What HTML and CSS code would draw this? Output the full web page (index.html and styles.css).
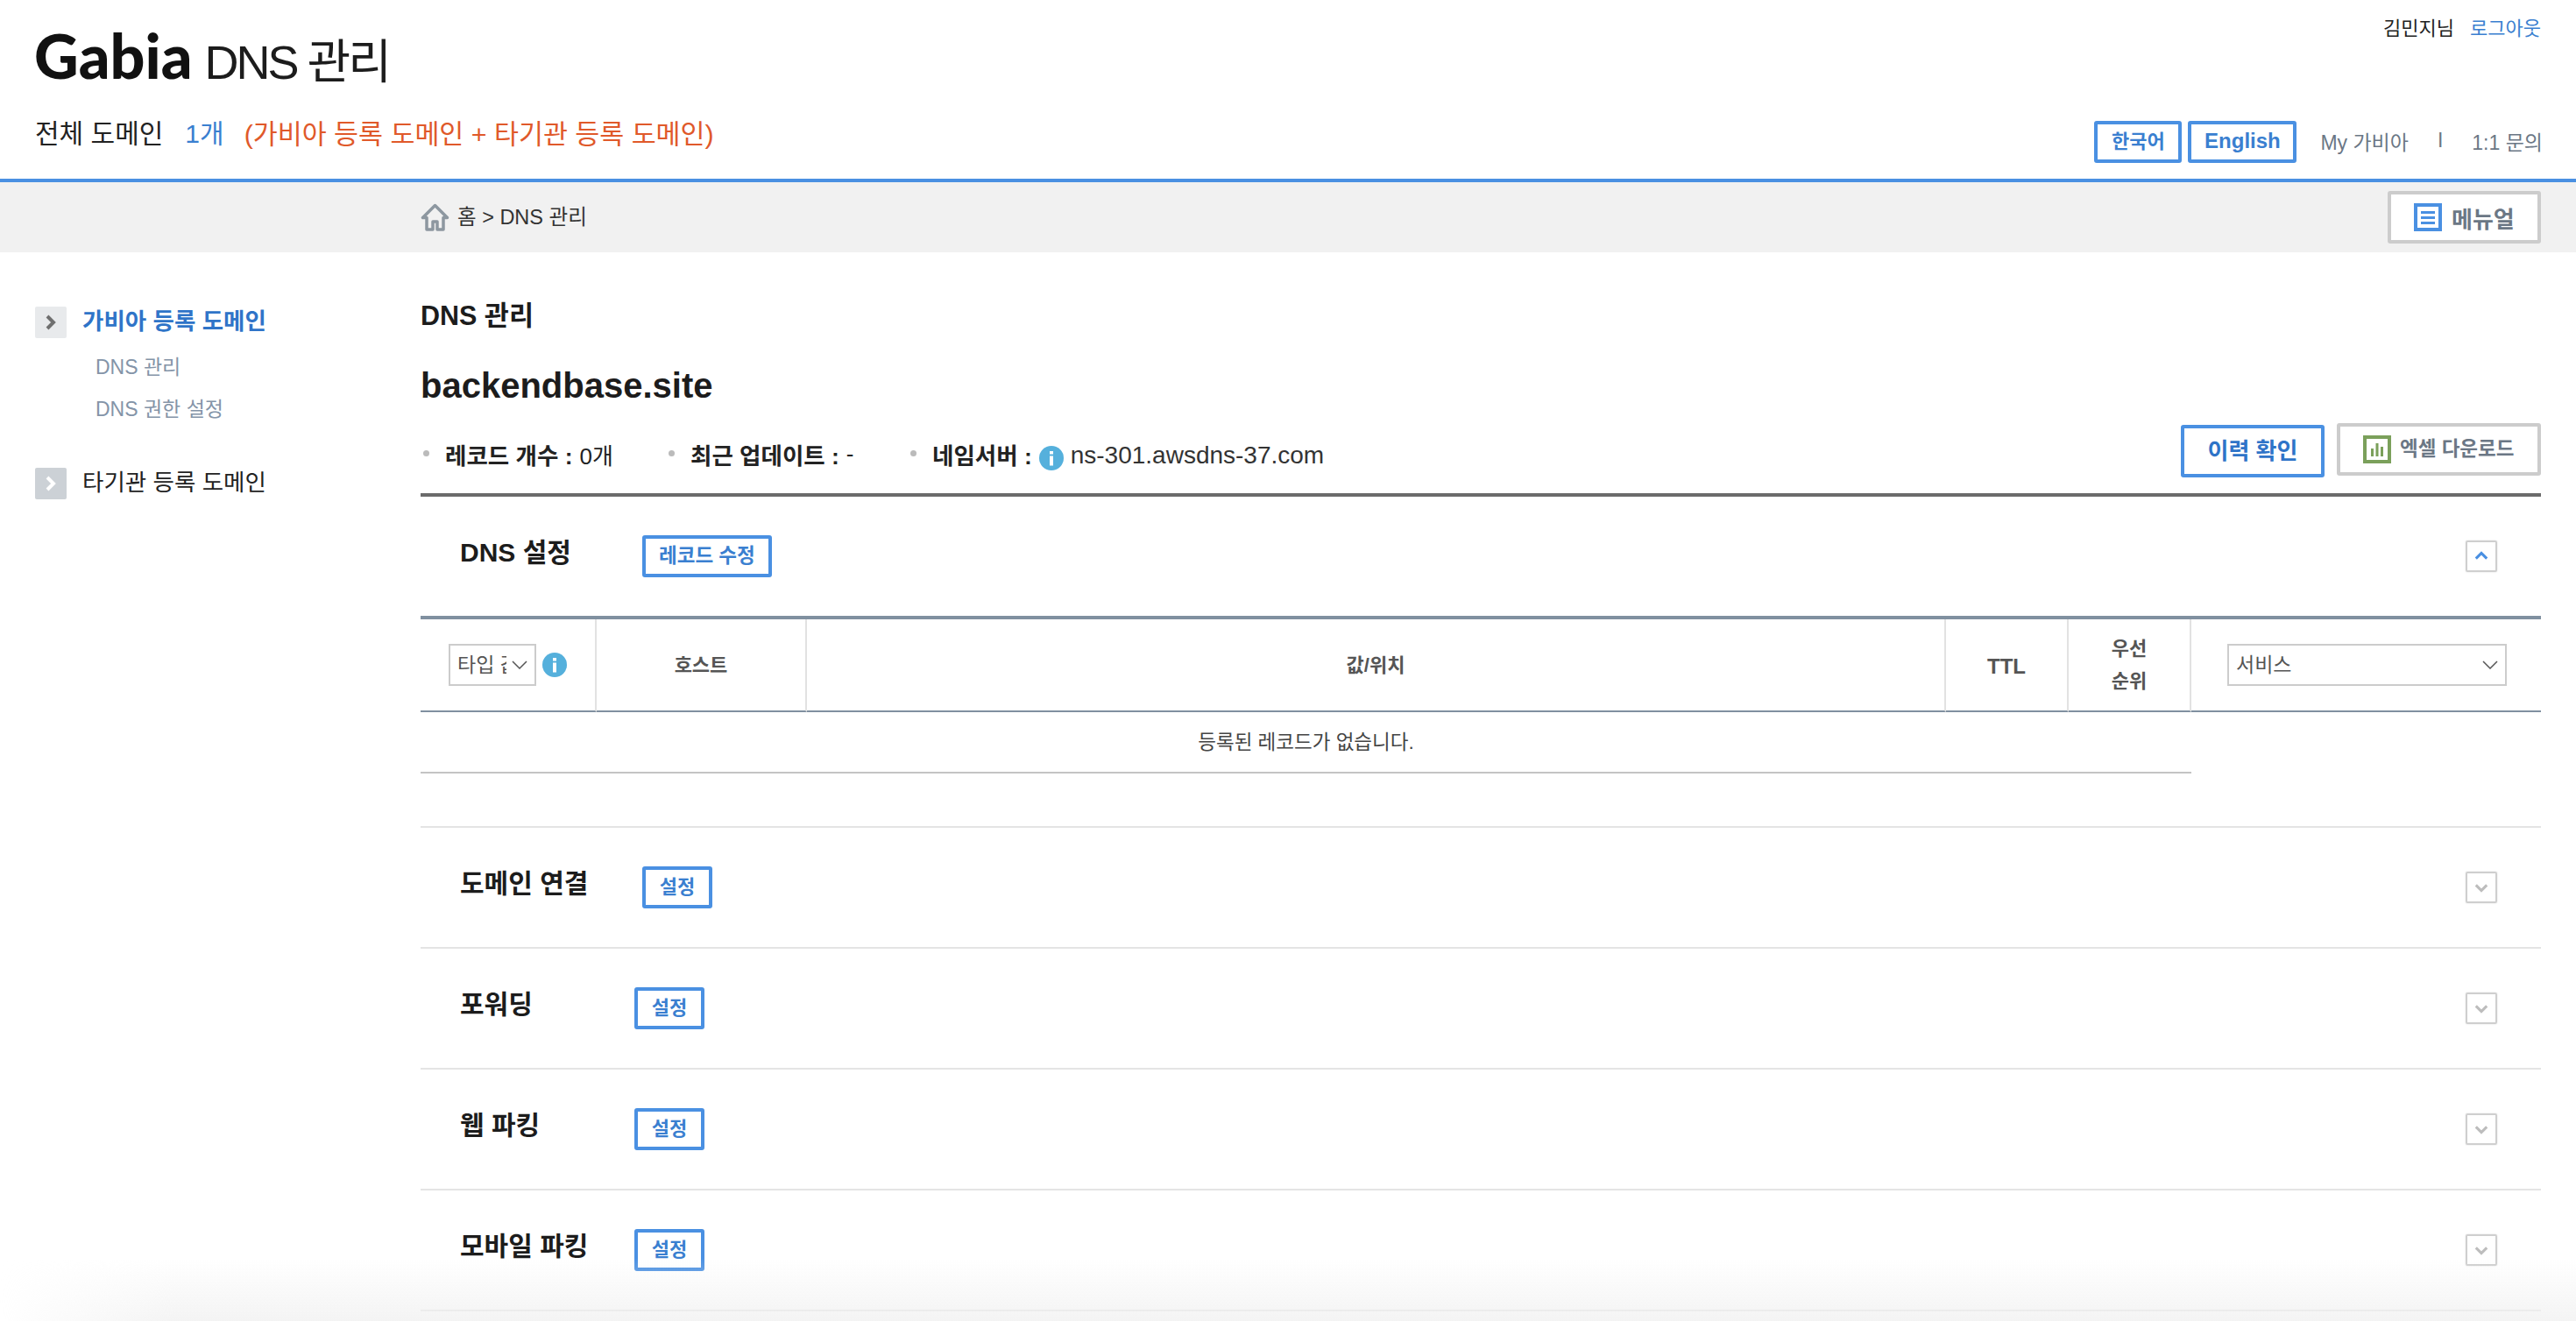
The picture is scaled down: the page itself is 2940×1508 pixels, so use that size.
FILE: index.html
```html
<!DOCTYPE html>
<html lang="ko">
<head>
<meta charset="utf-8">
<title>Gabia DNS 관리</title>
<link rel="stylesheet" href="styles.css">
</head>
<body>
<header class="site-header">
  <div class="brand-col">
    <h1 class="brand"><span class="brand-logo">Gabia</span><span class="brand-name">DNS 관리</span></h1>
    <p class="summary"><span>전체 도메인</span><span class="summary-count">1개</span><span class="summary-note">(가비아 등록 도메인 + 타기관 등록 도메인)</span></p>
  </div>
  <div class="util-col">
    <div class="user"><span>김민지님</span><a class="logout">로그아웃</a></div>
    <nav class="links">
      <a class="btn btn-lang-ko">한국어</a>
      <a class="btn btn-lang-en">English</a>
      <a class="link link-my">My 가비아</a>
      <span class="link link-sep">I</span>
      <a class="link link-ask">1:1 문의</a>
    </nav>
  </div>
</header>

<div class="crumbs">
  <div class="crumb-path">
    <svg class="home-icon" viewBox="0 0 33 32" aria-hidden="true"><path d="M16.5 2.500 L2.500 16.500 H7 V30 H14 V21 H19 V30 H26 V16.500 H30.500 Z" fill="none" stroke="#8d97a0" stroke-width="3.500" stroke-linejoin="round"/></svg>
    <span class="crumb-text">홈 &gt; DNS 관리</span>
  </div>
  <a class="btn-grey btn-manual">
    <svg class="sq-icon" viewBox="0 0 32 32" aria-hidden="true"><rect width="32" height="32" fill="#4a90e2"/><rect x="4" y="4" width="24" height="24" fill="#fff"/><path d="M8 9h16v3H8zM8 15h16v3H8zM8 21h16v3H8z" fill="#4a90e2"/></svg>
    <span>메뉴얼</span>
  </a>
</div>

<div class="layout">
  <aside class="sidebar">
    <div class="side-head side-head-active">
      <span class="side-arrow"><svg viewBox="0 0 36 36" aria-hidden="true"><path d="M14 11 L21 18 L14 25" fill="none" stroke="#6f6f6f" stroke-width="4"/></svg></span>
      <span class="side-label">가비아 등록 도메인</span>
    </div>
    <ul class="side-list">
      <li>DNS 관리</li>
      <li>DNS 권한 설정</li>
    </ul>
    <div class="side-head">
      <span class="side-arrow side-arrow-off"><svg viewBox="0 0 36 36" aria-hidden="true"><path d="M14 11 L21 18 L14 25" fill="none" stroke="#fff" stroke-width="4"/></svg></span>
      <span class="side-label">타기관 등록 도메인</span>
    </div>
  </aside>

  <main class="content">
    <h2 class="page-title">DNS 관리</h2>
    <h3 class="domain">backendbase.site</h3>
    <div class="info-row">
      <ul class="info-list">
        <li class="info-item info-records"><b>레코드 개수 :</b><span>0개</span></li>
        <li class="info-item info-updated"><b>최근 업데이트 :</b><span>-</span></li>
        <li class="info-item"><b>네임서버 :</b>
          <svg class="info-icon info-icon-ns" viewBox="0 0 28 28" aria-hidden="true"><circle cx="14" cy="14" r="14" fill="#55b0dc"/><rect x="12" y="6" width="4" height="3.500" fill="#fff"/><rect x="12" y="11.500" width="4" height="11" fill="#fff"/></svg>
          <span class="ns">ns-301.awsdns-37.com</span></li>
      </ul>
      <div class="info-actions">
        <a class="btn btn-history">이력 확인</a>
        <a class="btn-grey btn-excel">
          <svg class="sq-icon" viewBox="0 0 32 32" aria-hidden="true"><rect width="32" height="32" fill="#7ba05b"/><rect x="4" y="4" width="24" height="24" fill="#fff"/><path d="M9 15h3v9H9zM14.500 9h3v15h-3zM20 13h3v11h-3z" fill="#7ba05b"/></svg>
          <span>엑셀 다운로드</span>
        </a>
      </div>
    </div>

    <section class="panel panel-open">
      <div class="panel-head">
        <h4 class="panel-title">DNS 설정</h4>
        <a class="btn btn-small btn-record">레코드 수정</a>
        <span class="toggle"><svg viewBox="0 0 36 36" aria-hidden="true"><path d="M11 21 L18 14 L25 21" fill="none" stroke="#4a90e2" stroke-width="3.500"/></svg></span>
      </div>
      <table class="dns-table">
        <colgroup><col class="c-type"><col class="c-host"><col class="c-value"><col class="c-ttl"><col class="c-prio"><col class="c-svc"></colgroup>
        <thead>
          <tr>
            <th class="cell-type">
              <div class="type-wrap">
                <div class="select select-type"><span class="select-text">타입 값</span><svg class="select-chev" viewBox="0 0 18 10" aria-hidden="true"><path d="M1 1 L9 9 L17 1" fill="none" stroke="#555" stroke-width="1.500"/></svg></div>
                <svg class="info-icon" viewBox="0 0 28 28" aria-hidden="true"><circle cx="14" cy="14" r="14" fill="#55b0dc"/><rect x="12" y="6" width="4" height="3.500" fill="#fff"/><rect x="12" y="11.500" width="4" height="11" fill="#fff"/></svg>
              </div>
            </th>
            <th>호스트</th>
            <th>값/위치</th>
            <th class="cell-ttl">TTL</th>
            <th class="cell-prio">우선<br>순위</th>
            <th class="cell-svc">
              <div class="select select-svc"><span class="select-text">서비스</span><svg class="select-chev" viewBox="0 0 18 10" aria-hidden="true"><path d="M1 1 L9 9 L17 1" fill="none" stroke="#555" stroke-width="1.500"/></svg></div>
            </th>
          </tr>
        </thead>
        <tbody>
          <tr><td class="empty" colspan="5">등록된 레코드가 없습니다.</td><td class="empty-side"></td></tr>
        </tbody>
      </table>
    </section>

    <section class="panel">
      <div class="panel-head">
        <h4 class="panel-title">도메인 연결</h4>
        <a class="btn btn-small">설정</a>
        <span class="toggle toggle-closed"><svg viewBox="0 0 36 36" aria-hidden="true"><path d="M11 15 L18 22 L25 15" fill="none" stroke="#bdbdbd" stroke-width="3.500"/></svg></span>
      </div>
    </section>
    <section class="panel">
      <div class="panel-head">
        <h4 class="panel-title panel-title-short">포워딩</h4>
        <a class="btn btn-small">설정</a>
        <span class="toggle toggle-closed"><svg viewBox="0 0 36 36" aria-hidden="true"><path d="M11 15 L18 22 L25 15" fill="none" stroke="#bdbdbd" stroke-width="3.500"/></svg></span>
      </div>
    </section>
    <section class="panel">
      <div class="panel-head">
        <h4 class="panel-title panel-title-short">웹 파킹</h4>
        <a class="btn btn-small">설정</a>
        <span class="toggle toggle-closed"><svg viewBox="0 0 36 36" aria-hidden="true"><path d="M11 15 L18 22 L25 15" fill="none" stroke="#bdbdbd" stroke-width="3.500"/></svg></span>
      </div>
    </section>
    <section class="panel">
      <div class="panel-head">
        <h4 class="panel-title panel-title-short">모바일 파킹</h4>
        <a class="btn btn-small">설정</a>
        <span class="toggle toggle-closed"><svg viewBox="0 0 36 36" aria-hidden="true"><path d="M11 15 L18 22 L25 15" fill="none" stroke="#bdbdbd" stroke-width="3.500"/></svg></span>
      </div>
    </section>
  </main>
</div>
<div class="page-fade"></div>
</body>
</html>
```

FILE: styles.css
```css
* { box-sizing: border-box; }
html, body { margin: 0; padding: 0; background: #fff; }
html { height: 100%; overflow: hidden; }
body {
  font-family: "Liberation Sans", "Noto Sans CJK KR", sans-serif;
  color: #222;
  font-size: 22px;
}
h1, h2, h3, h4, p, ul { margin: 0; padding: 0; }
ul { list-style: none; }

/* Header */
.site-header {
  height: 208px;
  border-bottom: 4px solid #4a90e2;
  padding: 0 38px 0 40px;
  display: flex;
  justify-content: space-between;
}
.brand { display: flex; align-items: baseline; padding-top: 30px; font-weight: 400; line-height: 66px; color: #1c1c1c; }
.brand-logo { font-family: Lato, sans-serif; font-weight: 900; font-size: 70px; color: #111; margin-left: -1px; }
.brand-name { font-size: 54px; letter-spacing: -3px; margin-left: 14px; }
.summary { display: flex; margin-top: 29px; font-size: 30px; line-height: 40px; }
.summary-count { color: #3a7fd0; margin-left: 25px; }
.summary-note { color: #e0592a; margin-left: 23px; font-size: 30.400px; }

.util-col { display: flex; flex-direction: column; align-items: flex-end; }
.user { display: flex; gap: 18px; padding-top: 18px; padding-right: 2px; line-height: 30px; }
.logout { color: #3a7fd0; }
.links { display: flex; align-items: center; margin-top: 90px; height: 48px; }

.btn {
  display: flex;
  align-items: center;
  justify-content: center;
  border: 4px solid #4a90e2;
  border-radius: 3px;
  color: #3a7fd0;
  font-weight: 700;
  background: #fff;
}
.btn-lang-ko { width: 100px; height: 48px; padding-bottom: 6px; }
.btn-lang-en { width: 124px; height: 48px; margin-left: 7px; font-size: 24px; padding-bottom: 2px; }
.link { color: #6b7785; font-size: 23px; padding-bottom: 3px; }
.link-my { margin-left: 27px; }
.link-sep { margin-left: 33px; }
.link-ask { margin-left: 33px; }

/* Breadcrumb bar */
.crumbs {
  height: 80px;
  background: #f1f1f1;
  padding: 0 40px 0 480px;
  display: flex;
  align-items: center;
  justify-content: space-between;
}
.crumb-path { display: flex; align-items: center; gap: 9px; font-size: 23.500px; color: #333; }
.crumb-text { padding-bottom: 5px; }
.home-icon { width: 33px; height: 32px; }
.btn-grey {
  display: flex;
  align-items: center;
  background: #fff;
  border: 4px solid #ccc;
  border-radius: 3px;
  color: #6b7785;
  font-weight: 700;
}
.btn-manual { width: 175px; height: 60px; padding-left: 26px; gap: 11px; font-size: 26px; }
.sq-icon { width: 32px; height: 32px; flex: none; }

/* Main layout */
.layout { display: flex; }
.sidebar { width: 480px; flex: none; padding: 62px 0 0 40px; }
.side-head { display: flex; align-items: center; gap: 18px; font-size: 26.500px; height: 36px; }
.side-label { padding-bottom: 7px; }
.side-head-active { color: #2f74c8; font-weight: 700; }
.side-arrow { width: 36px; height: 36px; background: #e8eaec; border-radius: 2px; display: block; }
.side-arrow svg { display: block; width: 36px; height: 36px; }
.side-arrow-off { background: #ccd1d6; }
.side-list { padding: 18px 0 0 69px; height: 148px; color: #8494a8; font-size: 23px; }
.side-list li { line-height: 30px; margin-bottom: 18px; }

.content { width: 2420px; flex: none; }
.page-title { font-size: 30.500px; line-height: 40px; margin-top: 52px; color: #1c1c1c; }
.domain { font-size: 40px; line-height: 50px; margin-top: 35px; color: #1c1c1c; }
.info-row { display: flex; justify-content: space-between; margin-top: 18px; height: 84px; border-bottom: 4px solid #6b6b6b; align-items: flex-start; }
.info-list { display: flex; padding-top: 13px; font-size: 26px; }
.info-item { display: flex; align-items: center; height: 44px; gap: 8px; position: relative; padding-left: 28px; white-space: nowrap; }
.info-item::before { content: ""; position: absolute; left: 3px; top: 18px; width: 7px; height: 7px; border-radius: 50%; background: #bbb; }
.info-item b { color: #222; font-size: 26.500px; }
.info-records { width: 280px; }
.info-updated { width: 276px; }
.info-icon { width: 28px; height: 28px; flex: none; }
.info-icon-ns { margin-top: 10px; }
.ns { font-size: 28px; color: #333; padding-top: 4px; }
.info-actions { display: flex; gap: 14px; align-items: flex-start; }
.btn-history { width: 164px; height: 60px; font-size: 26px; margin-top: 2px; color: #2f74c8; padding-bottom: 6px; }
.btn-excel { width: 233px; height: 60px; padding-left: 26px; gap: 10px; font-size: 22.500px; }
.btn-excel span { padding-bottom: 6px; }

/* Panels */
.panel { border-bottom: 2px solid #e4e4e4; }
.panel-head { height: 136px; display: flex; align-items: center; padding: 0 50px 0 45px; }
.panel-title { width: 208px; font-size: 30px; line-height: 40px; padding-bottom: 8px; color: #1c1c1c; }
.panel-title-short { width: 199px; }
.btn-small { font-size: 22px; height: 48px; padding: 0 14px 6px; min-width: 80px; }
.btn-record { font-size: 22.500px; padding: 0 15px 6px; }
.toggle { margin-left: auto; width: 36px; height: 36px; border: 2px solid #cfcfcf; border-radius: 2px; box-shadow: 0 0 2px #ddd; }
.toggle svg { display: block; width: 32px; height: 32px; }
.panel-open { padding-bottom: 60px; }

/* Table */
.dns-table {
  width: 2420px;
  table-layout: fixed;
  border-collapse: separate;
  border-spacing: 0;
  border-top: 4px solid #8090a0;
}
.c-type { width: 201px; }
.c-host { width: 240px; }
.c-value { width: 1300px; }
.c-ttl { width: 140px; }
.c-prio { width: 140px; }
.c-svc { width: 399px; }
.dns-table th {
  height: 106px;
  border-bottom: 2px solid #8090a0;
  border-right: 2px solid #e2e2e2;
  font-size: 22px;
  font-weight: 700;
  color: #555;
  padding: 0;
  line-height: 37px;
}
.dns-table th.cell-svc { border-right: 0; padding-left: 41px; }
.dns-table th.cell-type { padding-left: 32px; }
.dns-table th.cell-ttl { font-size: 24px; padding-top: 2px; }
.type-wrap { display: flex; align-items: center; gap: 7px; }
.select {
  display: flex;
  align-items: center;
  justify-content: space-between;
  height: 48px;
  border: 2px solid #ccc;
  background: #fff;
  font-weight: 400;
  font-size: 23px;
  color: #555;
  padding: 0 8px;
}
.select-type { width: 100px; }
.select-type .select-text { width: 56px; overflow: hidden; white-space: nowrap; text-align: left; }
.select-svc { width: 319px; }
.select-chev { width: 18px; height: 10px; flex: none; }
.empty { height: 70px; border-bottom: 2px solid #c4c4c4; text-align: center; font-size: 22.500px; color: #444; padding: 0 0 4px; }
.empty-side { padding: 0; }

.page-fade {
  position: fixed;
  left: 0;
  right: 0;
  bottom: 0;
  height: 72px;
  background: linear-gradient(to bottom, rgba(240,240,240,0), rgba(240,240,240,.75));
  -webkit-mask-image: linear-gradient(to right, transparent 0, #000 200px);
  mask-image: linear-gradient(to right, transparent 0, #000 200px);
  pointer-events: none;
}
```
